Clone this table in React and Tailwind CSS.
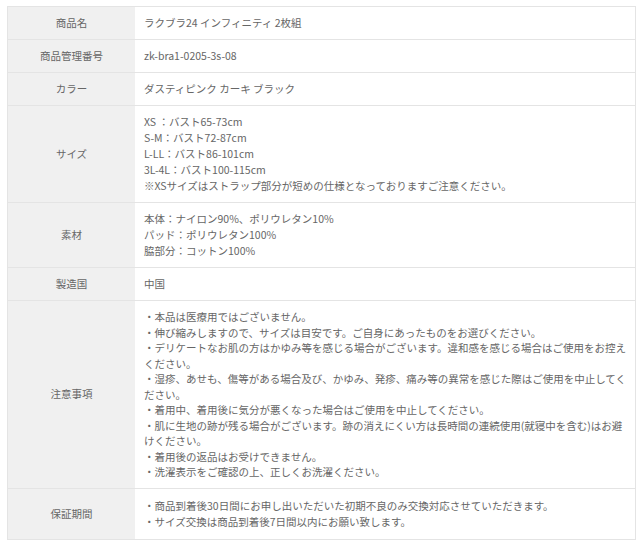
const rows = [
  { label: '商品名', lines: ['ラクブラ24 インフィニティ 2枚組'] },
  { label: '商品管理番号', lines: ['zk-bra1-0205-3s-08'] },
  { label: 'カラー', lines: ['ダスティピンク カーキ ブラック'] },
  {
    label: 'サイズ',
    lines: [
      'XS ：バスト65-73cm',
      'S-M：バスト72-87cm',
      'L-LL：バスト86-101cm',
      '3L-4L：バスト100-115cm',
      '※XSサイズはストラップ部分が短めの仕様となっておりますご注意ください。'
    ]
  },
  {
    label: '素材',
    lines: ['本体：ナイロン90%、ポリウレタン10%', 'パッド：ポリウレタン100%', '脇部分：コットン100%']
  },
  { label: '製造国', lines: ['中国'] },
  {
    label: '注意事項',
    tight: true,
    lines: [
      '・本品は医療用ではございません。',
      '・伸び縮みしますので、サイズは目安です。ご自身にあったものをお選びください。',
      '・デリケートなお肌の方はかゆみ等を感じる場合がございます。違和感を感じる場合はご使用をお控えください。',
      '・湿疹、あせも、傷等がある場合及び、かゆみ、発疹、痛み等の異常を感じた際はご使用を中止してください。',
      '・着用中、着用後に気分が悪くなった場合はご使用を中止してください。',
      '・肌に生地の跡が残る場合がございます。跡の消えにくい方は長時間の連続使用(就寝中を含む)はお避けください。',
      '・着用後の返品はお受けできません。',
      '・洗濯表示をご確認の上、正しくお洗濯ください。'
    ]
  },
  {
    label: '保証期間',
    lines: [
      '・商品到着後30日間にお申し出いただいた初期不良のみ交換対応させていただきます。',
      '・サイズ交換は商品到着後7日間以内にお願い致します。'
    ]
  }
];

export default function App() {
  return (
    <div
      className="min-h-screen bg-white pl-[7px] pt-[6px]"
      style={{ fontFamily: '"Noto Sans CJK JP", "Noto Sans", sans-serif' }}
    >
      <div className="w-[629px] border border-[#e4e4e4] text-[10.5px] leading-[16px] text-[#666]">
        {rows.map((row, i) => {
          const last = i === rows.length - 1;
          return (
            <div
              key={row.label}
              className={`grid grid-cols-[127px_1fr] ${last ? '' : 'border-b border-[#e4e4e4]'}`}
            >
              <div className="flex items-center justify-center bg-[#f0f0f0] px-2 text-center">
                {row.label}
              </div>
              <div
                className={`pl-[9px] pr-[5px] ${last ? 'py-[9px]' : 'py-[8px]'} ${row.tight ? 'leading-[15.5px]' : ''}`}
              >
                {row.lines.map((line) => (
                  <div key={line}>{line}</div>
                ))}
              </div>
            </div>
          );
        })}
      </div>
    </div>
  );
}
